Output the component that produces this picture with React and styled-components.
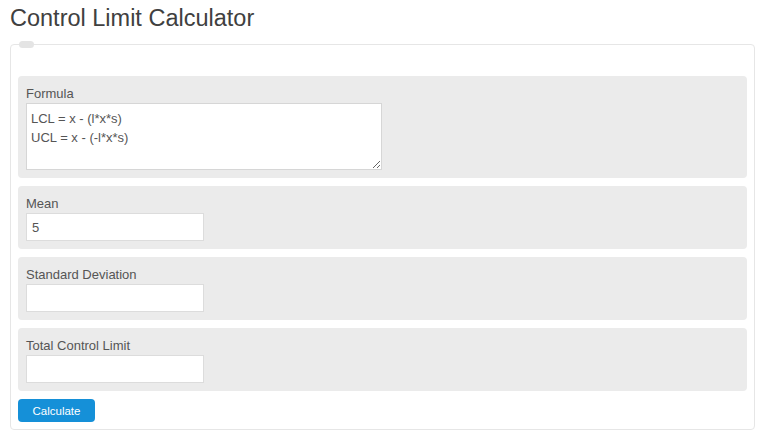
import React from "react";
import styled, { createGlobalStyle } from "styled-components";

const GlobalStyle = createGlobalStyle`
  html, body {
    margin: 0;
    padding: 0;
    background: #ffffff;
  }
  body {
    font-family: "Liberation Sans", Arial, sans-serif;
  }
`;

const fields = [
  { label: "Mean", value: "5" },
  { label: "Standard Deviation", value: "" },
  { label: "Total Control Limit", value: "" },
];

const App = () => {
  return (
    <>
      <GlobalStyle />
      <Page>
        <Title>Control Limit Calculator</Title>
        <Frame>
          <LegendBlob />
          <Panel>
            <Label>Formula</Label>
            <FormulaBox
              readOnly
              defaultValue={"LCL = x - (l*x*s)\nUCL = x - (-l*x*s)"}
            />
          </Panel>
          {fields.map((f) => (
            <Panel key={f.label}>
              <Label>{f.label}</Label>
              <Field type="text" defaultValue={f.value} />
            </Panel>
          ))}
          <Button>Calculate</Button>
        </Frame>
      </Page>
    </>
  );
};

export default App;

const Page = styled.div`
  padding: 4px 13px 0 10px;
`;

const Title = styled.h1`
  margin: 0 0 11px 0;
  font-size: 23.5px;
  line-height: 29px;
  font-weight: normal;
  color: #404040;
`;

const Frame = styled.div`
  position: relative;
  display: flex;
  flex-direction: column;
  align-items: flex-start;
  gap: 8px;
  border: 1px solid #e6e6e6;
  border-radius: 4px;
  padding: 31px 7px 7px 7px;
`;

const LegendBlob = styled.span`
  position: absolute;
  top: -4px;
  left: 8px;
  width: 15px;
  height: 7px;
  border-radius: 4px;
  background: #e4e4e4;
`;

const Panel = styled.div`
  align-self: stretch;
  display: flex;
  flex-direction: column;
  align-items: flex-start;
  background: #ebebeb;
  border-radius: 4px;
  padding: 8px 8px 8px 8px;
`;

const Label = styled.label`
  font-size: 13px;
  line-height: 19px;
  color: #555555;
`;

const FormulaBox = styled.textarea`
  box-sizing: border-box;
  width: 356px;
  height: 67px;
  margin: 0;
  padding: 5px 4px;
  border: 1px solid #d6d6d6;
  border-radius: 0;
  background: #ffffff;
  font-family: "Liberation Sans", Arial, sans-serif;
  font-size: 13px;
  line-height: 19px;
  color: #555555;
  outline: none;
`;

const Field = styled.input`
  box-sizing: border-box;
  width: 178px;
  height: 28px;
  margin: 0;
  padding: 4px 5px;
  border: 1px solid #dcdcdc;
  border-radius: 0;
  background: #ffffff;
  font-family: "Liberation Sans", Arial, sans-serif;
  font-size: 13px;
  color: #555555;
  outline: none;
`;

const Button = styled.button`
  width: 77px;
  height: 23px;
  margin: 0;
  padding: 0;
  border: none;
  border-radius: 4px;
  background: #1590d8;
  color: #ffffff;
  font-family: "Liberation Sans", Arial, sans-serif;
  font-size: 11.5px;
  cursor: pointer;
`;
